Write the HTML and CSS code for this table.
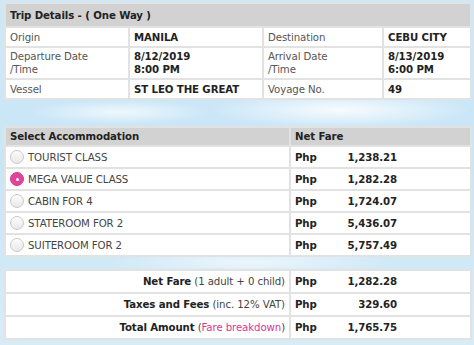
FILE: index.html
```html
<!DOCTYPE html>
<html>
<head>
<meta charset="utf-8">
<link rel="stylesheet" href="styles.css">
</head>
<body>
<div class="page">
  <table class="grid trip">
    <colgroup><col class="c1"><col class="c2"><col class="c3"><col class="c4"></colgroup>
    <tr class="rh"><th colspan="4" class="head">Trip Details - ( One Way )</th></tr>
    <tr class="r1"><td class="lbl">Origin</td><td class="val">MANILA</td><td class="lbl">Destination</td><td class="val">CEBU CITY</td></tr>
    <tr class="r2"><td class="lbl">Departure Date<br>/Time</td><td class="val">8/12/2019<br>8:00 PM</td><td class="lbl">Arrival Date<br>/Time</td><td class="val">8/13/2019<br>6:00 PM</td></tr>
    <tr class="r1"><td class="lbl">Vessel</td><td class="val">ST LEO THE GREAT</td><td class="lbl">Voyage No.</td><td class="val">49</td></tr>
  </table>

  <table class="grid acc">
    <colgroup><col class="a1"><col class="a2"></colgroup>
    <tr class="ah"><th class="head">Select Accommodation</th><th class="head">Net Fare</th></tr>
    <tr class="ar"><td class="opt"><span class="radio"></span>TOURIST CLASS</td><td class="fare"><span class="cur">Php</span><span class="amt">1,238.21</span></td></tr>
    <tr class="ar"><td class="opt"><span class="radio on"></span>MEGA VALUE CLASS</td><td class="fare"><span class="cur">Php</span><span class="amt">1,282.28</span></td></tr>
    <tr class="ar"><td class="opt"><span class="radio"></span>CABIN FOR 4</td><td class="fare"><span class="cur">Php</span><span class="amt">1,724.07</span></td></tr>
    <tr class="ar"><td class="opt"><span class="radio"></span>STATEROOM FOR 2</td><td class="fare"><span class="cur">Php</span><span class="amt">5,436.07</span></td></tr>
    <tr class="ar"><td class="opt"><span class="radio"></span>SUITEROOM FOR 2</td><td class="fare"><span class="cur">Php</span><span class="amt">5,757.49</span></td></tr>
  </table>

  <table class="grid sum">
    <colgroup><col class="a1"><col class="a2"></colgroup>
    <tr class="sr"><td class="slbl"><b>Net Fare</b> (1 adult + 0 child)</td><td class="fare"><span class="cur">Php</span><span class="amt">1,282.28</span></td></tr>
    <tr class="sr"><td class="slbl"><b>Taxes and Fees</b> (inc. 12% VAT)</td><td class="fare"><span class="cur">Php</span><span class="amt">329.60</span></td></tr>
    <tr class="sr"><td class="slbl"><b>Total Amount</b> (<span class="link">Fare breakdown</span>)</td><td class="fare"><span class="cur">Php</span><span class="amt">1,765.75</span></td></tr>
  </table>
</div>
</body>
</html>
```

FILE: styles.css
```css
html, body {
  margin: 0;
  padding: 0;
}
body {
  width: 474px;
  height: 345px;
  overflow: hidden;
  font-family: "DejaVu Sans", Verdana, sans-serif;
  font-size: 10.2px;
  letter-spacing: -0.1px;
  color: #333;
  background:
    radial-gradient(ellipse 130px 18px at 340px 110px, rgba(255,255,255,0.85), rgba(255,255,255,0) 100%),
    radial-gradient(ellipse 90px 12px at 120px 112px, rgba(255,255,255,0.7), rgba(255,255,255,0) 100%),
    radial-gradient(ellipse 140px 14px at 250px 262px, rgba(255,255,255,0.6), rgba(255,255,255,0) 100%),
    linear-gradient(180deg, #cfe8f7 0%, #c9e6f7 50%, #d8ecf7 100%);
}
.page {
  padding: 2px 4px 0 4px;
  display: flex;
  flex-direction: column;
}
.grid {
  width: 466px;
  border-collapse: collapse;
  table-layout: fixed;
  background: #fff;
}
.grid td, .grid th {
  border: 2px solid #e2e2e2;
  text-align: left;
  vertical-align: middle;
  padding: 0 4px;
}
.head {
  background: #d2d2d2;
  color: #222;
  font-weight: bold;
}
.rh { height: 24px; }
.r1 { height: 20px; }
.r2 { height: 32px; }
.c1 { width: 124px; }
.c2 { width: 134px; }
.c3 { width: 120px; }
.c4 { width: 88px; }
.trip td { line-height: 13px; }
.lbl { color: #555; }
.val { font-weight: bold; color: #222; }
.acc { margin-top: 26px; }
.ah { height: 19px; }
.ar { height: 22px; }
.sr { height: 23px; }
.a1 { width: 285px; }
.a2 { width: 181px; }
.opt { color: #444; }
.radio {
  display: inline-block;
  width: 14px;
  height: 14px;
  border: 1px solid #cacaca;
  border-radius: 50%;
  background: linear-gradient(180deg, #fcfcfc, #e8e8e8);
  vertical-align: -3px;
  margin: 0 4px 0 0;
  box-sizing: border-box;
  position: relative;
}
.radio.on {
  background: #e0449b;
  border-color: #d43a8e;
}
.radio.on::after {
  content: "";
  position: absolute;
  left: 4.5px;
  top: 4.5px;
  width: 3px;
  height: 3px;
  border-radius: 50%;
  background: #fff;
}
.fare { white-space: nowrap; }
.cur {
  font-weight: bold;
  color: #222;
  display: inline-block;
  width: 30px;
}
.amt {
  font-weight: bold;
  color: #222;
  display: inline-block;
  width: 72px;
  text-align: right;
}
.sum { margin-top: 12px; }
.grid .slbl {
  text-align: right;
  color: #444;
}
.slbl b { color: #222; }
.link { color: #e0348f; }
```
